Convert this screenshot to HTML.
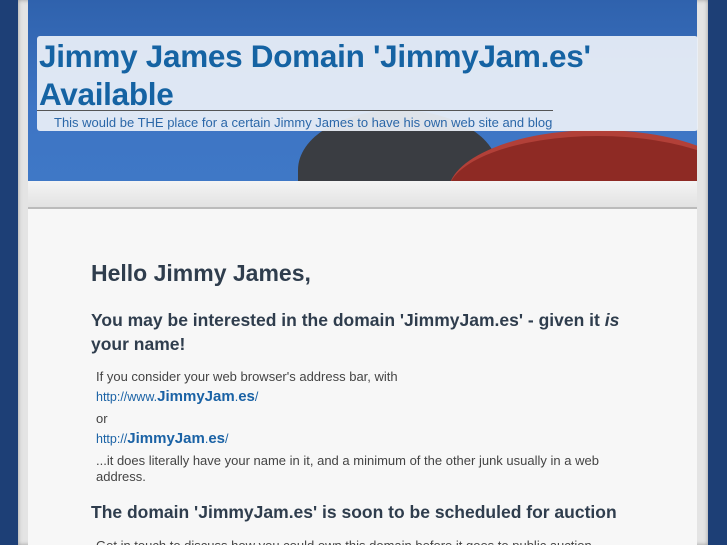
<!DOCTYPE html>
<html><head><style>
html,body{margin:0;width:727px;height:545px;overflow:hidden;}
body{background:#1d3f76;font-family:"Liberation Sans",sans-serif;position:relative;}
#frame{position:absolute;left:18px;top:0;width:690px;height:545px;background:#e4e4e4;box-shadow:inset 0 0 4px #999;}
#hdr{position:absolute;left:28px;top:0;width:669px;height:181px;background:linear-gradient(#2f62ad,#3d74c4 60%,#3f78c6);overflow:hidden;}
#hat{position:absolute;left:270px;top:110px;width:200px;height:120px;border-radius:50% 50% 0 0;background:#3a3d42;}
#brim{position:absolute;left:420px;top:130px;width:300px;height:120px;border-radius:50% 50% 0 0;background:#8e2a24;border-top:6px solid #b24038;}
#box{position:absolute;left:37px;top:36px;width:661px;height:95px;background:rgba(235,240,248,0.93);border-radius:3px;}
#box h1{margin:0;position:absolute;left:2px;top:1px;font-size:31.5px;line-height:38px;color:#1563a3;font-weight:bold;letter-spacing:-0.3px;}
#line{position:absolute;left:37px;top:110px;width:516px;height:1px;background:#555;}
#tag{position:absolute;left:54px;top:115px;font-size:13px;color:#2b67a8;}
#band{position:absolute;left:28px;top:181px;width:669px;height:26px;background:linear-gradient(#f4f4f4,#e2e2e2);border-bottom:2px solid #bbb;}
#content{position:absolute;left:28px;top:209px;width:669px;height:336px;background:#f7f7f7;}
h2{position:absolute;left:91px;top:260px;margin:0;font-size:23px;color:#2f3d4d;}
h3{margin:0;font-size:17.5px;color:#2f3d4d;line-height:24px;}
.p{position:absolute;left:96px;font-size:13px;color:#444;line-height:16px;}
a{color:#1a62a5;text-decoration:none;font-size:12.5px}
a b{font-size:15px}
</style></head><body>
<div id="frame"></div>
<div id="hdr"><div id="hat"></div><div id="brim"></div></div>
<div id="box"><h1>Jimmy James Domain 'JimmyJam.es'<br>Available</h1></div>
<div id="line"></div>
<div id="tag">This would be THE place for a certain Jimmy James to have his own web site and blog</div>
<div id="band"></div>
<div id="content"></div>
<h2>Hello Jimmy James,</h2>
<h3 style="position:absolute;left:91px;top:308px;width:545px">You may be interested in the domain 'JimmyJam.es' - given it <i>is</i> your name!</h3>
<div class="p" style="top:369px">If you consider your web browser's address bar, with</div>
<div class="p" style="top:389px"><a>http://www.<b>JimmyJam</b>.<b>es</b>/</a></div>
<div class="p" style="top:411px">or</div>
<div class="p" style="top:431px"><a>http://<b>JimmyJam</b>.<b>es</b>/</a></div>
<div class="p" style="top:453px;width:520px">...it does literally have your name in it, and a minimum of the other junk usually in a web address.</div>
<h3 style="position:absolute;left:91px;top:500px">The domain 'JimmyJam.es' is soon to be scheduled for auction</h3>
<div class="p" style="top:538px">Get in touch to discuss how you could own this domain before it goes to public auction</div>
</body></html>
